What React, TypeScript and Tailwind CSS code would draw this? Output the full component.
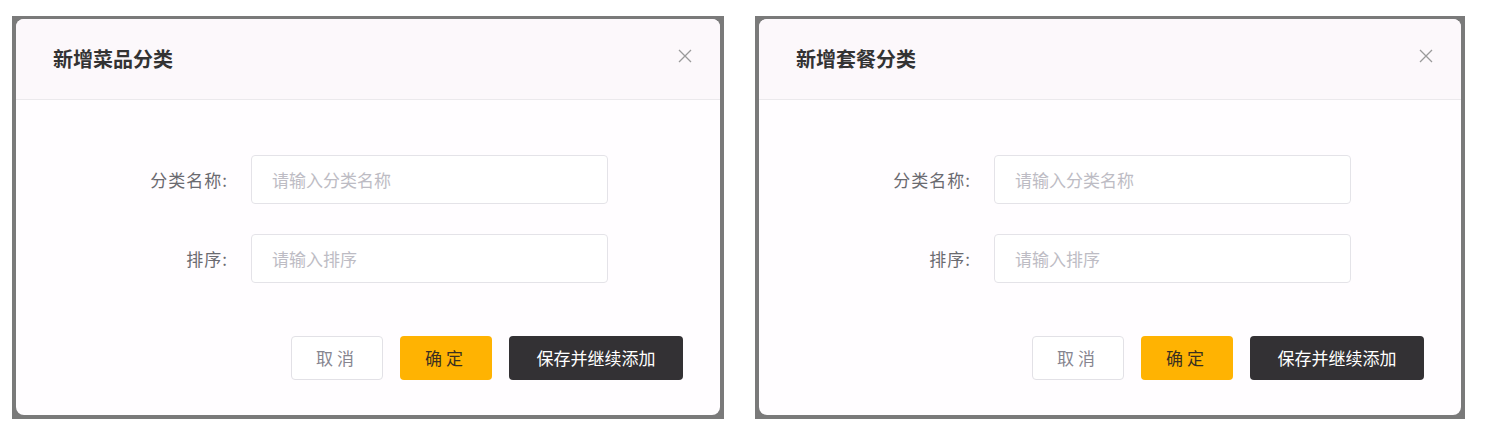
import React from 'react';

interface DialogProps {
  title: string;
  width: string;
}

const CloseIcon = () => (
  <svg width="14" height="14" viewBox="0 0 14 14" className="mb-[7px]">
    <path d="M1 1L13 13M13 1L1 13" stroke="#9a9a9a" strokeWidth="1.3" fill="none" />
  </svg>
);

const Dialog: React.FC<DialogProps> = ({ title, width }) => {
  return (
    <div className={`${width} h-[403px] bg-[#7a7a7a] pl-[4px] pr-[4px] pt-[3px] pb-[4px]`}>
      <div className="h-full rounded-[8px] bg-[#fffdff] overflow-hidden flex flex-col">
        {/* header */}
        <div className="h-[81px] flex items-center justify-between pl-[37px] pr-[28px] bg-[#fcf8fb] border-b border-[#ebe9ec]">
          <h2 className="text-[20px] font-bold text-[#333] leading-none">{title}</h2>
          <CloseIcon />
        </div>

        {/* form */}
        <div className="flex flex-col gap-[30px] pt-[55px]">
          <div className="flex items-center gap-[23px]">
            <label className="w-[212px] text-right text-[17px] tracking-[1px] text-[#6a6a70]">分类名称:</label>
            <div className="w-[357px] h-[49px] border border-[#e4e3e8] rounded-[4px] bg-white flex items-center px-[20px] text-[17px] text-[#bdbcc4]">
              请输入分类名称
            </div>
          </div>
          <div className="flex items-center gap-[23px]">
            <label className="w-[212px] text-right text-[17px] tracking-[1px] text-[#6a6a70]">排序:</label>
            <div className="w-[357px] h-[49px] border border-[#e4e3e8] rounded-[4px] bg-white flex items-center px-[20px] text-[17px] text-[#bdbcc4]">
              请输入排序
            </div>
          </div>
        </div>

        {/* actions */}
        <div className="flex justify-end gap-[17px] pr-[37px] pt-[53px]">
          <button className="w-[92px] h-[44px] rounded-[4px] border border-[#e2e1e6] bg-white text-[17px] text-[#86858f] tracking-[4px]">
            取消
          </button>
          <button className="w-[92px] h-[44px] rounded-[4px] bg-[#ffb302] text-[17px] text-[#3a3020] tracking-[4px]">
            确定
          </button>
          <button className="w-[174px] h-[44px] rounded-[4px] bg-[#333134] text-[17px] text-white">
            保存并继续添加
          </button>
        </div>
      </div>
    </div>
  );
};

export default function App() {
  return (
    <div
      className="w-[1492px] h-[440px] bg-white flex gap-[31px] pl-[12px] pt-[16px]"
      style={{ fontFamily: '"Noto Sans CJK SC", "Noto Sans", sans-serif' }}
    >
      <Dialog title="新增菜品分类" width="w-[712px]" />
      <Dialog title="新增套餐分类" width="w-[710px]" />
    </div>
  );
}
